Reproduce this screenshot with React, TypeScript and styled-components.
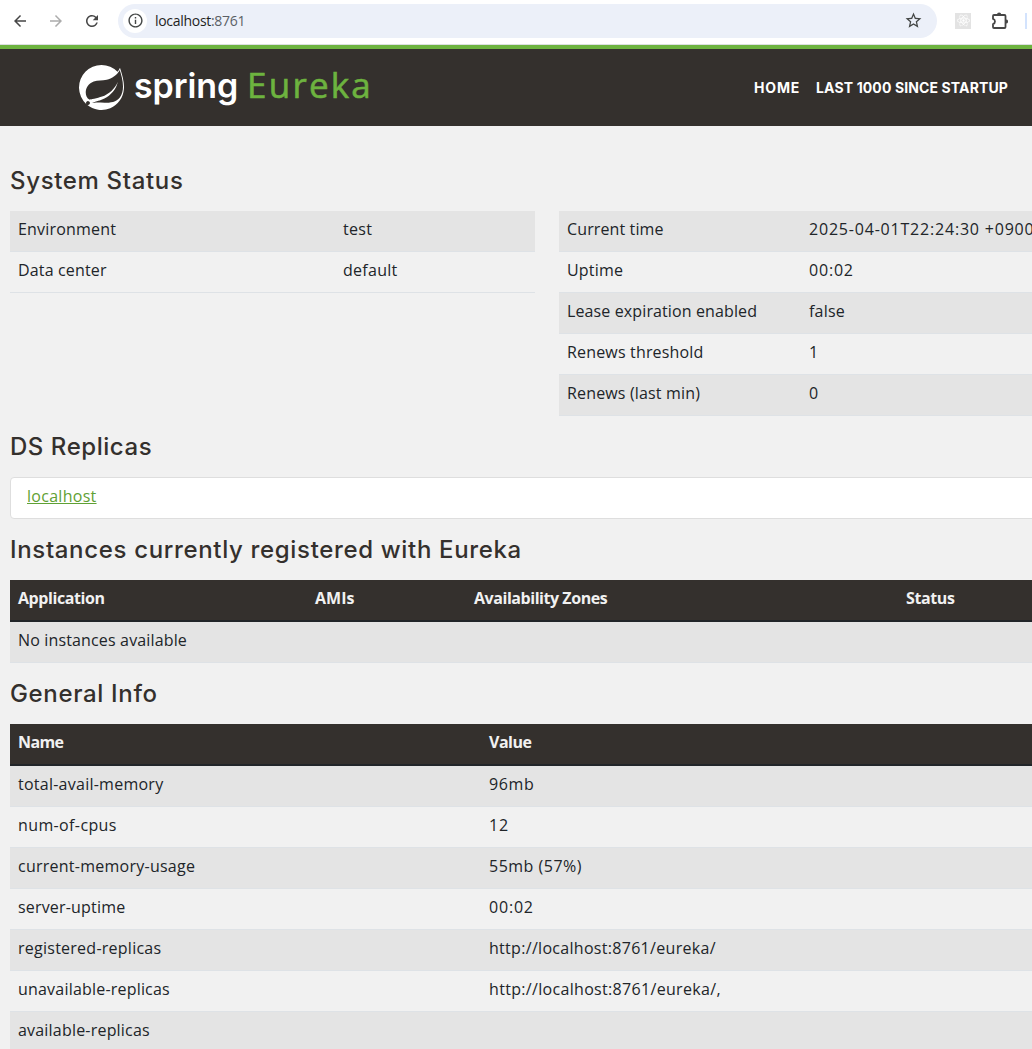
import React from "react";
import styled, { createGlobalStyle } from "styled-components";
import { SiSpring, SiReact } from "react-icons/si";
import { MdArrowBack, MdArrowForward, MdInfoOutline, MdRefresh, MdStarOutline } from "react-icons/md";

const GlobalStyle = createGlobalStyle`
  * { box-sizing: border-box; }
  body {
    margin: 0;
    background: #f1f1f1;
    color: #212529;
    font: 16px/24px "Open Sans", "Noto Sans", sans-serif;
    overflow: hidden;
  }
`;

const Page = styled.div`
  width: 100%;
  height: 1049px;
  overflow: hidden;
`;

const BrowserBar = styled.div`
  display: flex;
  align-items: center;
  height: 45px;
  padding: 0 5px 3px 11px;
  background: #fff;
  border-bottom: 1px solid #dcdfe1;
`;

const NavButton = styled.span<{ $disabled?: boolean }>`
  display: flex;
  width: 18px;
  margin-right: 18px;
  font-size: 18px;
  color: ${(p) => (p.$disabled ? "#acacac" : "#464646")};
`;

const AddressBar = styled.div`
  display: flex;
  align-items: center;
  width: 819px;
  height: 34px;
  margin-left: -1px;
  padding: 0 14px 0 5px;
  border-radius: 17px;
  background: #ecf0f9;
  color: #444746;
`;

const SiteInfo = styled.span`
  display: flex;
  align-items: center;
  justify-content: center;
  width: 24px;
  height: 24px;
  margin-right: 8px;
  border-radius: 50%;
  background: #fff;
  font-size: 17px;
`;

const Url = styled.span`
  flex: 1;
  padding-top: 1px;
  font-size: 14px;
  line-height: 20px;
  letter-spacing: -0.3px;
  color: #1f1f1f;
`;

const Port = styled.span`
  color: #5b5f66;
`;

const StarIcon = styled(MdStarOutline)`
  font-size: 19px;
`;

const ExtensionBadge = styled.span`
  display: flex;
  align-items: center;
  justify-content: center;
  width: 16px;
  height: 16px;
  margin: 0 21px 0 18px;
  background: #e3e3e3;
  color: #fff;
  font-size: 13px;
`;

const ToolbarDivider = styled.span`
  width: 2px;
  height: 16px;
  margin-left: auto;
  background: #d3e3fd;
`;

const Header = styled.header`
  display: flex;
  align-items: center;
  height: 81px;
  padding: 0 24px 0 79px;
  border-top: 4px solid #6db33f;
  background: #34302d;
`;

const Brand = styled.div`
  display: flex;
  align-items: center;
  color: #fff;
`;

const SpringLogo = styled(SiSpring)`
  width: 45px;
  height: 45px;
`;

const SpringWord = styled.span`
  margin-left: 10px;
  padding-bottom: 3px;
  font: 600 34px/46px Inter, sans-serif;
  letter-spacing: -0.1px;
`;

const EurekaWord = styled.span`
  margin-left: 9px;
  padding-bottom: 5px;
  font: 400 35px/46px "Open Sans", sans-serif;
  letter-spacing: 2.2px;
  color: #6db33f;
  -webkit-text-stroke: 0.6px #6db33f;
`;

const Nav = styled.nav`
  display: flex;
  gap: 16px;
  margin-left: auto;
`;

const NavLink = styled.a<{ $tracking: number }>`
  font: 700 14px/20px Inter, sans-serif;
  letter-spacing: ${(p) => p.$tracking}px;
  white-space: nowrap;
  color: #fff;
`;

const Main = styled.main`
  width: 1074px;
  padding: 24px 0 0 10px;
`;

const Heading = styled.h1<{ $tracking?: number }>`
  margin: 0;
  padding: 16px 0;
  font: 500 24px/29px Inter, sans-serif;
  letter-spacing: ${(p) => p.$tracking ?? 0.66}px;
  color: #34302d;
`;

const StatusColumns = styled.div`
  display: grid;
  grid-template-columns: 525px 525px;
  align-items: start;
  column-gap: 24px;
`;

const Table = styled.div<{ $columns: string }>`
  display: grid;
  grid-template-columns: ${(p) => p.$columns};
`;

const Row = styled.div<{ $striped?: boolean }>`
  display: grid;
  grid-column: 1 / -1;
  grid-template-columns: subgrid;
  height: 41px;
  border-bottom: 1px solid #dee2e6;
  background: ${(p) => (p.$striped ? "#e4e4e4" : "transparent")};
`;

const HeadRow = styled(Row)`
  height: 42px;
  border-bottom: 2px solid #212529;
  background: #34302d;
  color: #f1f1f1;
  font-weight: 700;
`;

const Cell = styled.span<{ $tracking?: number }>`
  padding: 6px 8px 10px;
  letter-spacing: ${(p) => p.$tracking ?? 0}px;
  white-space: nowrap;
`;

const ReplicaItem = styled.div`
  padding: 6px 16px 10px;
  border: 1px solid #dedede;
  border-radius: 4px;
  background: #fff;
`;

const ReplicaLink = styled.a`
  letter-spacing: 0.28px;
  color: #5fa134;
  text-decoration: underline;
  text-decoration-thickness: 1px;
  text-underline-offset: 1px;
`;

type Entry = { text: string; tracking?: number };
type Pair = [Entry, Entry];

const e = (text: string, tracking = 0.2): Entry => ({ text, tracking });

const environment: Pair[] = [
  [e("Environment"), e("test", 0.3)],
  [e("Data center", 0.15), e("default", 0.27)],
];

const runtime: Pair[] = [
  [e("Current time", 0.12), e("2025-04-01T22:24:30 +0900", 0.8)],
  [e("Uptime", 0.2), e("00:02", 0.8)],
  [e("Lease expiration enabled", 0.12), e("false", 0.2)],
  [e("Renews threshold", 0.17), e("1")],
  [e("Renews (last min)", 0.16), e("0")],
];

const generalInfo: Pair[] = [
  [e("total-avail-memory", 0.25), e("96mb", 0.6)],
  [e("num-of-cpus", 0.38), e("12", 0.8)],
  [e("current-memory-usage", 0.25), e("55mb (57%)", 0.5)],
  [e("server-uptime", 0.18), e("00:02", 0.8)],
  [e("registered-replicas", 0.25), e("http://localhost:8761/eureka/", 0.3)],
  [e("unavailable-replicas"), e("http://localhost:8761/eureka/,", 0.32)],
  [e("available-replicas"), e("")],
];

function PairRows({ rows }: { rows: Pair[] }) {
  return (
    <>
      {rows.map((pair, i) => (
        <Row key={pair[0].text} $striped={i % 2 === 0}>
          {pair.map((cell, j) => (
            <Cell key={j} $tracking={cell.tracking}>{cell.text}</Cell>
          ))}
        </Row>
      ))}
    </>
  );
}

function PuzzleIcon() {
  return (
    <svg width="16" height="17" viewBox="0 0 16 17" fill="none">
      <path
        d="M2 3H12.5Q13.5 3 13.5 4V15Q13.5 16 12.5 16H2Q1 16 1 15V12.1A2.7 2.7 0 0 0 1 6.9V4Q1 3 2 3Z"
        stroke="#464646"
        strokeWidth="1.8"
        strokeLinejoin="round"
      />
      <path d="M5 2.6a2.1 2.1 0 0 1 4.2 0zM14 7.4a2.1 2.1 0 0 1 0 4.2z" fill="#464646" />
    </svg>
  );
}

export default function App() {
  return (
    <Page>
      <GlobalStyle />
      <BrowserBar>
        <NavButton><MdArrowBack /></NavButton>
        <NavButton $disabled><MdArrowForward /></NavButton>
        <NavButton><MdRefresh /></NavButton>
        <AddressBar>
          <SiteInfo><MdInfoOutline /></SiteInfo>
          <Url>localhost<Port>:8761</Port></Url>
          <StarIcon />
        </AddressBar>
        <ExtensionBadge><SiReact /></ExtensionBadge>
        <PuzzleIcon />
        <ToolbarDivider />
      </BrowserBar>
      <Header>
        <Brand>
          <SpringLogo />
          <SpringWord>spring</SpringWord>
          <EurekaWord>Eureka</EurekaWord>
        </Brand>
        <Nav>
          <NavLink $tracking={0.8}>HOME</NavLink>
          <NavLink $tracking={0.12}>LAST 1000 SINCE STARTUP</NavLink>
        </Nav>
      </Header>
      <Main>
        <Heading>System Status</Heading>
        <StatusColumns>
          <Table $columns="325px 200px"><PairRows rows={environment} /></Table>
          <Table $columns="242px 283px"><PairRows rows={runtime} /></Table>
        </StatusColumns>
        <Heading $tracking={0.55}>DS Replicas</Heading>
        <ReplicaItem><ReplicaLink>localhost</ReplicaLink></ReplicaItem>
        <Heading>Instances currently registered with Eureka</Heading>
        <Table $columns="297px 159px 432px 1fr">
          <HeadRow>
            <Cell $tracking={-0.42}>Application</Cell>
            <Cell>AMIs</Cell>
            <Cell $tracking={-0.45}>Availability Zones</Cell>
            <Cell $tracking={-0.4}>Status</Cell>
          </HeadRow>
          <Row $striped><Cell $tracking={0.15}>No instances available</Cell></Row>
        </Table>
        <Heading>General Info</Heading>
        <Table $columns="471px 1fr">
          <HeadRow>
            <Cell $tracking={-0.6}>Name</Cell>
            <Cell $tracking={-0.5}>Value</Cell>
          </HeadRow>
          <PairRows rows={generalInfo} />
        </Table>
      </Main>
    </Page>
  );
}
